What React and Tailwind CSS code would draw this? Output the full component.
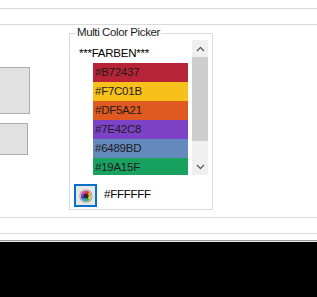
import React from "react";

const rows = [
  { hex: "#B72437", bg: "bg-[#b72437]" },
  { hex: "#F7C01B", bg: "bg-[#f7c01b]" },
  { hex: "#DF5A21", bg: "bg-[#df5a21]" },
  { hex: "#7E42C8", bg: "bg-[#7e42c8]" },
  { hex: "#6489BD", bg: "bg-[#6489bd]" },
  { hex: "#19A15F", bg: "bg-[#19a15f]" },
];

function Wheel() {
  const colors = ["#e23b3b", "#e8a33a", "#d8d83a", "#3ab84a", "#3aa0d8", "#4a4ad0", "#b03ac8", "#e03a90"];
  const cx = 7, cy = 7, r = 5.2;
  const segs = colors.map((c, i) => {
    const a0 = (i / colors.length) * Math.PI * 2 - Math.PI / 2;
    const a1 = ((i + 1) / colors.length) * Math.PI * 2 - Math.PI / 2;
    const x0 = cx + r * Math.cos(a0), y0 = cy + r * Math.sin(a0);
    const x1 = cx + r * Math.cos(a1), y1 = cy + r * Math.sin(a1);
    return <path key={i} d={`M${cx} ${cy} L${x0} ${y0} A${r} ${r} 0 0 1 ${x1} ${y1} Z`} fill={c} />;
  });
  return (
    <svg width="14" height="14" viewBox="0 0 14 14">
      <circle cx="7" cy="7" r="6.6" fill="#9a9a9a" />
      <circle cx="7" cy="7" r="5.8" fill="#d8d8d8" />
      {segs}
      <circle cx="7" cy="7" r="2.6" fill="#2a2a2a" />
    </svg>
  );
}

export default function App() {
  return (
    <div
      className="w-[317px] h-[297px] bg-white overflow-hidden flex flex-col text-[11.5px] tracking-[-0.25px] text-black"
      style={{ fontFamily: '"Liberation Sans", Arial, sans-serif' }}
    >
      <div className="h-[8px] shrink-0" />
      <div className="h-px shrink-0 bg-[#dadada]" />
      <div className="h-[15px] shrink-0" />
      <div className="h-px shrink-0 bg-[#dadada]" />
      {/* main area y=25..216 */}
      <div className="h-[192px] shrink-0 flex">
        <div className="w-[30px] shrink-0 flex flex-col pt-[42px]">
          <div className="w-[30px] h-[47px] bg-[#e1e1e1] border border-l-0 border-[#adadad]" />
          <div className="w-[28px] h-[32px] mt-[9px] bg-[#e1e1e1] border border-l-0 border-[#adadad]" />
        </div>
        <div className="ml-[39px] mt-[8px] w-[144px] h-[177px] border border-[#dcdcdc] relative shrink-0">
          <div className="absolute -top-[8px] left-[6px] px-[1px] bg-white leading-[13px] tracking-[-0.4px] text-[#1a1a1a]">
            Multi Color Picker
          </div>
          <div className="pt-[6px] pl-[6px] flex">
            <div className="w-[116px] h-[135px] overflow-hidden flex flex-col pt-[4px]">
              <div className="h-[19px] shrink-0 leading-[19px] pl-[3px]">***FARBEN***</div>
              {rows.map((r) => (
                <div
                  key={r.hex}
                  className={`h-[19px] shrink-0 leading-[19px] ml-[17px] w-[95px] pl-[2px] text-[#1c1c1c] ${r.bg}`}
                >
                  {r.hex}
                </div>
              ))}
            </div>
            <div className="w-[16px] h-[135px] bg-[#f0f0f0] flex flex-col">
              <div className="h-[17px] flex items-center justify-center text-[#606060]">
                <svg width="9" height="6" viewBox="0 0 9 6">
                  <path d="M1 5 L4.5 1.5 L8 5" fill="none" stroke="#606060" strokeWidth="1.4" />
                </svg>
              </div>
              <div className="h-[84px] bg-[#cdcdcd]" />
              <div className="flex-1" />
              <div className="h-[17px] flex items-center justify-center">
                <svg width="9" height="6" viewBox="0 0 9 6">
                  <path d="M1 1 L4.5 4.5 L8 1" fill="none" stroke="#606060" strokeWidth="1.4" />
                </svg>
              </div>
            </div>
          </div>
          <div className="flex items-start mt-[9px] pl-[4px]">
            <div className="w-[23px] h-[23px] border-2 border-[#0c6fc9] bg-[#e6e6e6] flex items-center justify-center">
              <Wheel />
            </div>
            <div className="ml-[7px] mt-[1px] leading-[19px]">#FFFFFF</div>
          </div>
        </div>
      </div>
      <div className="h-px shrink-0 bg-[#dadada]" />
      <div className="h-[15px] shrink-0" />
      <div className="h-px shrink-0 bg-[#dadada]" />
      <div className="h-[6px] shrink-0" />
      <div className="h-px shrink-0 bg-[#9c9c9c]" />
      <div className="h-px shrink-0 bg-[#e8e8e8]" />
      <div className="flex-1 bg-black" />
    </div>
  );
}
